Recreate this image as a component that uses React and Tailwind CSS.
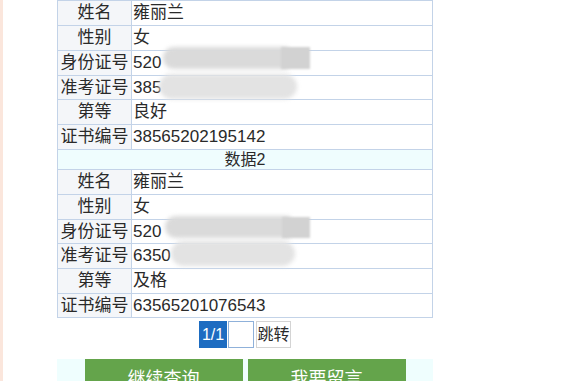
import React from "react";

const font = { fontFamily: '"Liberation Sans", "Noto Sans CJK SC", sans-serif' };

function Row({ label, value, h }) {
  return (
    <div className={`flex border-b border-[#c3d3e8] ${h}`}>
      <div className="w-[74px] shrink-0 border-r border-[#c3d3e8] bg-[#f4f6f9] flex items-center justify-center text-[17px] text-[#2a2a2a] whitespace-nowrap">
        {label}
      </div>
      <div className="flex-1 flex items-center pl-[1px] text-[17px] text-[#2a2a2a] whitespace-nowrap">
        {value}
      </div>
    </div>
  );
}

function Blob({ className }) {
  return <div className={`absolute pointer-events-none ${className}`} />;
}

export default function App() {
  return (
    <div className="w-[571px] h-[381px] overflow-hidden bg-white relative border-l-[3px] border-[#fbe6dc]" style={font}>
      <div className="ml-[54px] w-[376px]">
        <div className="border-l border-r border-t border-[#c3d3e8]">
          <Row label="姓名" value="雍丽兰" h="h-[25px]" />
          <Row label="性别" value="女" h="h-[25px]" />
          <Row label="身份证号" value="520" h="h-[25px]" />
          <Row label="准考证号" value="385" h="h-[24px]" />
          <Row label="第等" value="良好" h="h-[25px]" />
          <Row label="证书编号" value="38565202195142" h="h-[25px]" />
          <div className="h-[20px] border-b border-[#c3d3e8] bg-[#effdfe] flex items-center justify-center text-[16px] text-[#2a2a2a]">
            数据2
          </div>
          <Row label="姓名" value="雍丽兰" h="h-[25px]" />
          <Row label="性别" value="女" h="h-[25px]" />
          <Row label="身份证号" value="520" h="h-[24px]" />
          <Row label="准考证号" value="6350" h="h-[25px]" />
          <Row label="第等" value="及格" h="h-[25px]" />
          <Row label="证书编号" value="63565201076543" h="h-[24px]" />
        </div>

        <div className="flex justify-center items-stretch gap-[1px] mt-[3px] h-[27px]">
          <div className="w-[28px] bg-[#1d6cc1] text-white text-[16px] flex items-center justify-center">1/1</div>
          <div className="w-[26px] border border-[#8fb1da] bg-white" />
          <div className="w-[35px] border border-[#d4d4d4] bg-white text-[16px] text-[#2a2a2a] flex items-center justify-center ml-[1px]">跳转</div>
        </div>

        <div className="mt-[11px] h-[50px] bg-[#effefe] flex justify-center gap-[5px]">
          <div className="w-[158px] h-[42px] bg-[#64a44b] text-white text-[18px] leading-none flex items-start justify-center pt-[11px]">
            继续查询
          </div>
          <div className="w-[158px] h-[42px] bg-[#64a44b] text-white text-[18px] leading-none flex items-start justify-center pt-[11px]">
            我要留言
          </div>
        </div>
      </div>

      {/* redaction blurs, section 1 */}
      <Blob className="left-[160px] top-[47px] w-[125px] h-[22px] rounded-l-full bg-[#dadada] blur-[2px]" />
      <Blob className="left-[278px] top-[47px] w-[29px] h-[22px] bg-[#d2d2d2] blur-[1px]" />
      <Blob className="left-[156px] top-[74px] w-[138px] h-[25px] rounded-full bg-[#e3e3e3] blur-[2px]" />
      {/* section 2 */}
      <Blob className="left-[162px] top-[216px] w-[125px] h-[22px] rounded-l-full bg-[#dadada] blur-[2px]" />
      <Blob className="left-[279px] top-[217px] w-[28px] h-[21px] bg-[#d2d2d2] blur-[1px]" />
      <Blob className="left-[168px] top-[241px] w-[124px] h-[25px] rounded-full bg-[#e3e3e3] blur-[2px]" />
    </div>
  );
}
